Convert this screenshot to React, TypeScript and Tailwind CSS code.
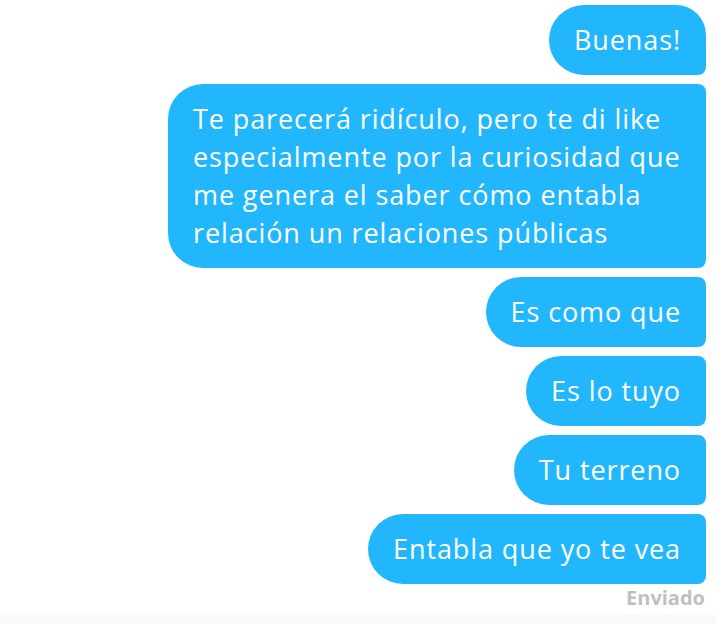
const bubbleFont = { fontFamily: '"Open Sans", "Noto Sans", sans-serif' };

type Msg = {
  id: number;
  lines: string[];
  shape: string;
};

const messages: Msg[] = [
  { id: 1, lines: ['Buenas!'], shape: 'rounded-l-[35px] rounded-tr-[30px] rounded-br-[8px]' },
  {
    id: 2,
    lines: [
      'Te parecerá ridículo, pero te di like',
      'especialmente por la curiosidad que',
      'me genera el saber cómo entabla',
      'relación un relaciones públicas',
    ],
    shape: 'rounded-l-[35px] rounded-r-[8px] w-[538px]',
  },
  { id: 3, lines: ['Es como que'], shape: 'rounded-l-[35px] rounded-r-[8px]' },
  { id: 4, lines: ['Es lo tuyo'], shape: 'rounded-l-[35px] rounded-r-[8px]' },
  { id: 5, lines: ['Tu terreno'], shape: 'rounded-l-[35px] rounded-r-[8px]' },
  { id: 6, lines: ['Entabla que yo te vea'], shape: 'rounded-l-[35px] rounded-r-[8px]' },
];

export default function App() {
  return (
    <div className="w-[716px] h-[624px] bg-white overflow-hidden flex flex-col">
      <div className="flex flex-col items-end gap-[9px] pt-[5px] pr-[10px]">
        {messages.map(m => (
          <div
            key={m.id}
            style={bubbleFont}
            className={`bg-[#22b7fc] text-white text-[27px] tracking-[0.9px] leading-[38px] px-[25px] py-[16px] ${m.shape}`}
          >
            {m.lines.map((l, i) => (
              <div key={i} className="whitespace-nowrap">{l}</div>
            ))}
          </div>
        ))}
      </div>
      <div className="flex justify-end pr-[11px] pt-[2px]">
        <span
          className="text-[20px] font-bold text-[#bfbfbf] leading-[24px]"
          style={{ fontFamily: '"Open Sans", "Noto Sans", sans-serif' }}
        >
          Enviado
        </span>
      </div>
      <div className="flex-1" />
      <div className="h-[10px] bg-[#fafafa]" />
    </div>
  );
}
